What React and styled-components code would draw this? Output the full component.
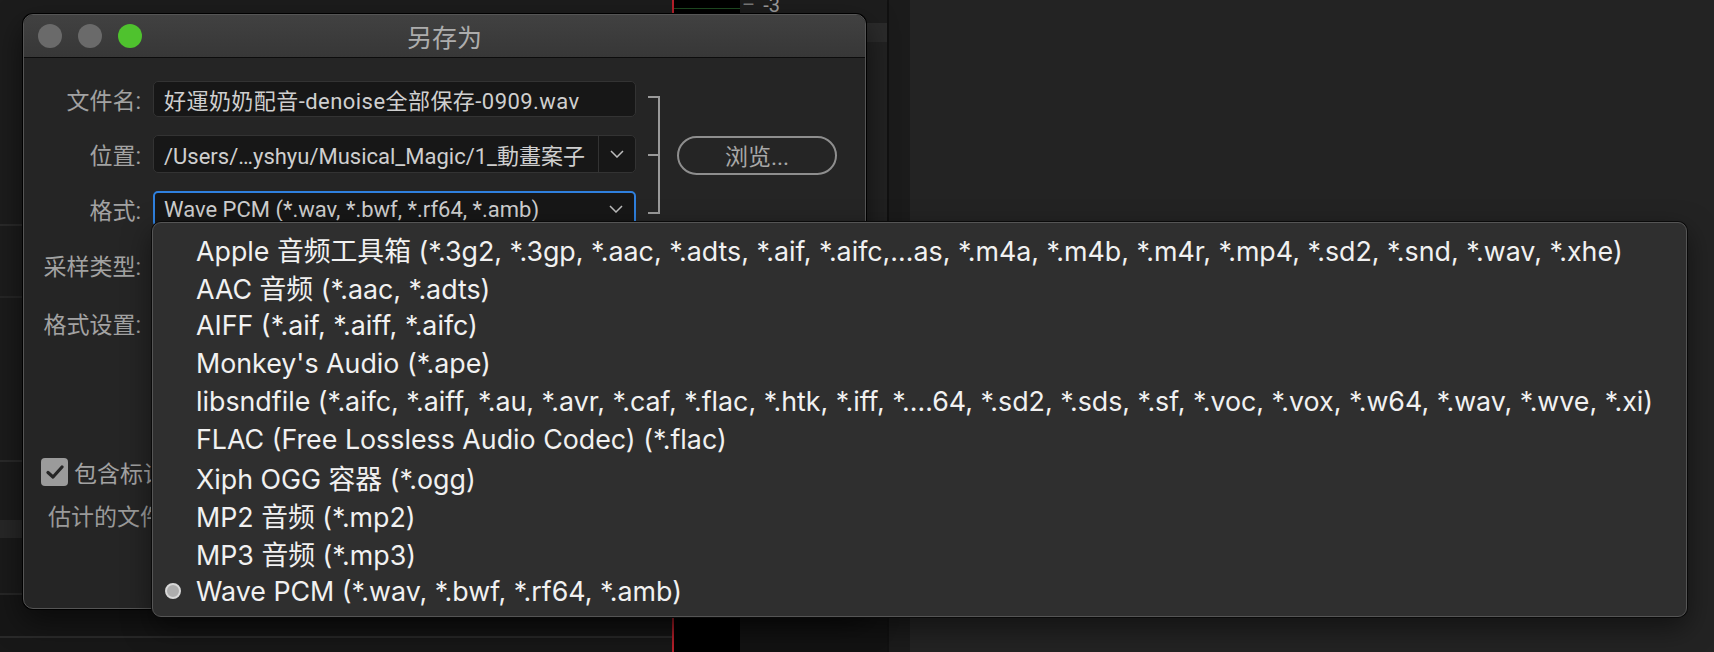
import React from 'react';
import styled, { createGlobalStyle } from 'styled-components';

const GlobalStyle = createGlobalStyle`
  html, body {
    margin: 0;
    padding: 0;
    background: #232323;
    overflow: hidden;
  }
`;

const MENU_FONT = `"Inter", "Noto Sans CJK SC", sans-serif`;
const DIALOG_FONT = `"Roboto", "Noto Sans CJK SC", sans-serif`;

const Workspace = styled.div`
  position: relative;
  width: 1714px;
  height: 652px;
  display: flex;
  background: #232323;
  overflow: hidden;
`;

const TrackPanel = styled.div`
  width: 672px;
  display: flex;
  flex-direction: column;
  background: #1b1b1b;
`;

const Lane = styled.div`
  height: ${(p) => p.$h}px;
  flex: ${(p) => (p.$fill ? 1 : 'none')};
  background: ${(p) => p.$bg};
`;

const Meter = styled.div`
  width: 66px;
  background: #000;
  border-left: 2px solid #b71f2a;
  display: flex;
  flex-direction: column;
`;

const MeterTick = styled.div`
  margin-top: 8px;
  height: 1px;
  background: #1e4a22;
`;

const ScaleCol = styled.div`
  width: 147px;
  display: flex;
  flex-direction: column;
  background: #222;
`;

const ScaleHead = styled.div`
  height: 23px;
  background: #1d1d1d;
  display: flex;
  align-items: flex-start;
  gap: 8px;
  padding-left: 2px;
  overflow: hidden;
`;

const ScaleLabel = styled.span`
  margin-top: -7px;
  font: 20px ${DIALOG_FONT};
  color: #9c9c9c;
  &:first-child {
    color: #777;
  }
`;

const Divider = styled.div`
  width: 2px;
  background: #111;
`;

const Strip = styled.div`
  width: 21px;
  background: #1b1b1b;
`;

const RightArea = styled.div`
  flex: 1;
  background: #232323;
`;

/* ---------- dialog ---------- */

const Dialog = styled.div`
  position: absolute;
  left: 23px;
  top: 14px;
  width: 843px;
  height: 595px;
  box-sizing: border-box;
  border-radius: 10px;
  border: 1px solid #555;
  background: #252525;
  box-shadow: 0 0 0 1px #000, 0 12px 30px rgba(0, 0, 0, 0.55);
  overflow: hidden;
  font-family: ${DIALOG_FONT};
`;

const TitleBar = styled.div`
  height: 42px;
  display: grid;
  grid-template-columns: 1fr auto 1fr;
  align-items: center;
  background: linear-gradient(#414141, #373737);
  border-bottom: 1px solid #0c0c0c;
`;

const Lights = styled.div`
  display: flex;
  gap: 16px;
  padding-left: 14px;
`;

const Light = styled.span`
  width: 24px;
  height: 24px;
  border-radius: 50%;
  background: ${(p) => p.$color};
`;

const Title = styled.div`
  font-size: 25px;
  color: #adadad;
`;

const Body = styled.div`
  padding-top: 23px;
`;

const FormArea = styled.div`
  display: flex;
  align-items: flex-start;
`;

const FormGrid = styled.div`
  display: grid;
  grid-template-columns: 117px 483px;
  grid-template-rows: 36px 38px 36px 40px 40px;
  column-gap: 12px;
  row-gap: 18px;
`;

const Label = styled.div`
  text-align: right;
  align-self: center;
  font-size: 23px;
  color: #a2a2a2;
  white-space: nowrap;
`;

const Field = styled.div`
  box-sizing: border-box;
  display: flex;
  align-items: center;
  background: #171717;
  border: ${(p) => (p.$focus ? '2px solid #2f80de' : '1px solid #333')};
  border-radius: 5px;
  font-size: 22px;
  color: #cfcfcf;
  white-space: nowrap;
  overflow: hidden;
`;

const FieldText = styled.span`
  flex: 1;
  padding-left: ${(p) => (p.$focus ? 9 : 10)}px;
  letter-spacing: ${(p) => (p.$wide ? '0.45px' : 'normal')};
  overflow: hidden;
`;

const DropSeg = styled.span`
  width: 36px;
  align-self: stretch;
  display: flex;
  align-items: center;
  justify-content: center;
  border-left: ${(p) => (p.$split ? '1px solid #333' : 'none')};
`;

const BracketGroup = styled.div`
  display: flex;
  align-items: center;
  margin-top: 15px;
  margin-left: 12px;
  gap: 17px;
`;

const Bracket = styled.div`
  position: relative;
  box-sizing: border-box;
  width: 12px;
  height: 118px;
  border: 2px solid #9a9a9a;
  border-left: none;

  &::after {
    content: '';
    position: absolute;
    left: 0;
    right: 0;
    top: 56px;
    height: 2px;
    background: #9a9a9a;
  }
`;

const BrowseButton = styled.button`
  width: 160px;
  height: 39px;
  border: 2px solid #8e8e8e;
  border-radius: 20px;
  background: transparent;
  font: 23px ${DIALOG_FONT};
  color: #a8a8a8;
  padding: 0;
`;

const CheckRow = styled.div`
  margin-top: 112px;
  padding-left: 17px;
  display: flex;
  align-items: center;
  gap: 6px;
  font-size: 23px;
  color: #a2a2a2;
  white-space: nowrap;
`;

const CheckBox = styled.span`
  width: 27px;
  height: 28px;
  border-radius: 4px;
  background: #9b9b9b;
  display: flex;
  align-items: center;
  justify-content: center;
`;

const EstimateRow = styled.div`
  margin-top: 9px;
  padding-left: 24px;
  font-size: 23px;
  color: #9a9a9a;
  white-space: nowrap;
`;

/* ---------- popup menu ---------- */

const Menu = styled.div`
  position: absolute;
  left: 152px;
  top: 222px;
  width: 1535px;
  height: 395px;
  box-sizing: border-box;
  padding: 7px 0 8px;
  border-radius: 9px;
  background: #2f2f2f;
  border: 1px solid #555;
  box-shadow: 0 0 0 1px #0a0a0a, 0 10px 28px rgba(0, 0, 0, 0.5);
  font-family: ${MENU_FONT};
`;

const Item = styled.div`
  height: 38px;
  display: flex;
  align-items: center;
  gap: 15px;
  padding-left: 12px;
  font-size: 26.8px;
  color: #f1f1f1;
  white-space: nowrap;
`;

const Mark = styled.span`
  width: 16px;
  height: 16px;
  box-sizing: border-box;
  border-radius: 50%;
  background: ${(p) => (p.$on ? '#adadad' : 'transparent')};
  border: ${(p) => (p.$on ? '2px solid #d8d8d8' : 'none')};
`;

const Chevron = () => (
  <svg width="14" height="8" viewBox="0 0 14 8">
    <polyline points="1,1 7,7 13,1" fill="none" stroke="#bdbdbd" strokeWidth="1.5" />
  </svg>
);

const Check = () => (
  <svg width="18" height="16" viewBox="0 0 18 16">
    <polyline points="2,8.5 7,13 16,3" fill="none" stroke="#262626" strokeWidth="3.2" strokeLinecap="round" strokeLinejoin="round" />
  </svg>
);

const formats = [
  'Apple 音频工具箱 (*.3g2, *.3gp, *.aac, *.adts, *.aif, *.aifc,…as, *.m4a, *.m4b, *.m4r, *.mp4, *.sd2, *.snd, *.wav, *.xhe)',
  'AAC 音频 (*.aac, *.adts)',
  'AIFF (*.aif, *.aiff, *.aifc)',
  "Monkey's Audio (*.ape)",
  'libsndfile (*.aifc, *.aiff, *.au, *.avr, *.caf, *.flac, *.htk, *.iff, *.…64, *.sd2, *.sds, *.sf, *.voc, *.vox, *.w64, *.wav, *.wve, *.xi)',
  'FLAC (Free Lossless Audio Codec) (*.flac)',
  'Xiph OGG 容器 (*.ogg)',
  'MP2 音频 (*.mp2)',
  'MP3 音频 (*.mp3)',
  'Wave PCM (*.wav, *.bwf, *.rf64, *.amb)',
];

const lanes = [
  { h: 224, bg: '#1c1c1c' },
  { h: 2, bg: '#2a2a2a' },
  { h: 70, bg: '#1c1c1c' },
  { h: 2, bg: '#262626' },
  { h: 162, bg: '#1b1b1b' },
  { h: 2, bg: '#2a2a2a' },
  { h: 58, bg: '#1b1b1b' },
  { h: 18, bg: '#272727' },
  { h: 55, bg: '#1a1a1a' },
  { h: 2, bg: '#272727' },
  { h: 41, bg: '#161616' },
  { h: 2, bg: '#2a2a2a' },
  { fill: true, bg: '#181818' },
];

const App = () => {
  return (
    <>
      <GlobalStyle />
      <Workspace>
        <TrackPanel>
          {lanes.map((l, i) => (
            <Lane key={i} $h={l.h} $bg={l.bg} $fill={l.fill} />
          ))}
        </TrackPanel>
        <Meter>
          <MeterTick />
        </Meter>
        <ScaleCol>
          <ScaleHead>
            <ScaleLabel>–</ScaleLabel>
            <ScaleLabel>-3</ScaleLabel>
          </ScaleHead>
          <Lane $h={19} $bg="#2b2b2b" />
          <Lane $fill $bg="#222" />
          <Lane $h={35} $bg="#131313" />
        </ScaleCol>
        <Divider />
        <Strip />
        <RightArea />

        <Dialog>
          <TitleBar>
            <Lights>
              <Light $color="#6a6a6a" />
              <Light $color="#6a6a6a" />
              <Light $color="#4fc22e" />
            </Lights>
            <Title>另存为</Title>
            <div />
          </TitleBar>
          <Body>
            <FormArea>
              <FormGrid>
                <Label>文件名:</Label>
                <Field>
                  <FieldText $wide>好運奶奶配音-denoise全部保存-0909.wav</FieldText>
                </Field>
                <Label>位置:</Label>
                <Field>
                  <FieldText>/Users/…yshyu/Musical_Magic/1_動畫案子</FieldText>
                  <DropSeg $split>
                    <Chevron />
                  </DropSeg>
                </Field>
                <Label>格式:</Label>
                <Field $focus>
                  <FieldText $focus>Wave PCM (*.wav, *.bwf, *.rf64, *.amb)</FieldText>
                  <DropSeg>
                    <Chevron />
                  </DropSeg>
                </Field>
                <Label>采样类型:</Label>
                <div />
                <Label>格式设置:</Label>
                <div />
              </FormGrid>
              <BracketGroup>
                <Bracket />
                <BrowseButton>浏览...</BrowseButton>
              </BracketGroup>
            </FormArea>
            <CheckRow>
              <CheckBox>
                <Check />
              </CheckBox>
              包含标记和其他元数据
            </CheckRow>
            <EstimateRow>估计的文件大小: 1.16 GB</EstimateRow>
          </Body>
        </Dialog>

        <Menu>
          {formats.map((f, i) => (
            <Item key={f}>
              <Mark $on={i === formats.length - 1} />
              <span>{f}</span>
            </Item>
          ))}
        </Menu>
      </Workspace>
    </>
  );
};

export default App;
